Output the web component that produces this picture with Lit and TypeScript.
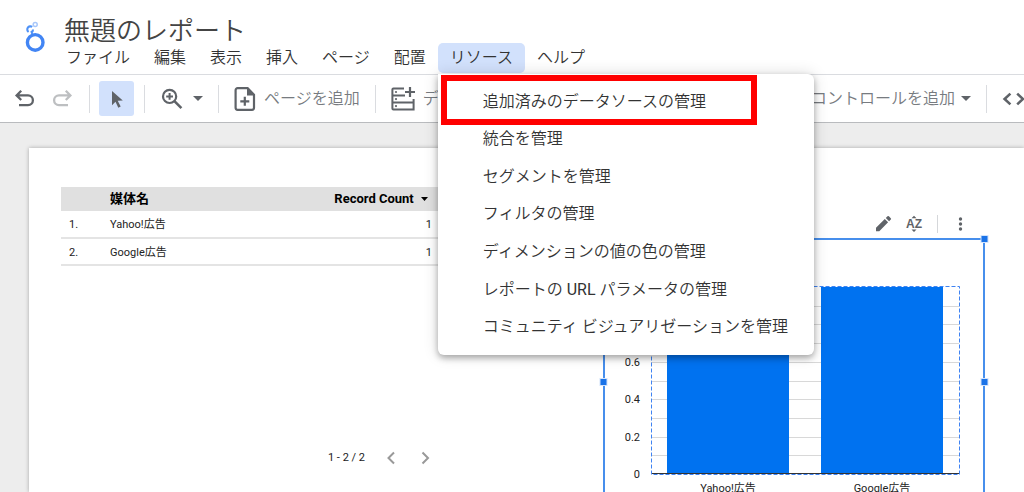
import { LitElement, html, svg, css } from "lit";
import { customElement, property } from "lit/decorators.js";

const MENUS = ["ファイル", "編集", "表示", "挿入", "ページ", "配置", "リソース", "ヘルプ"];
const OPEN_MENU = "リソース";
const RESOURCE_ITEMS = [
  "追加済みのデータソースの管理",
  "統合を管理",
  "セグメントを管理",
  "フィルタの管理",
  "ディメンションの値の色の管理",
  html`レポートの <span class="latin">URL</span> パラメータの管理`,
  "コミュニティ ビジュアリゼーションを管理",
];
const DATA = [
  { name: "Yahoo!広告", count: 1 },
  { name: "Google広告", count: 1 },
];

const caret = svg`<svg width="10" height="5" viewBox="0 0 10 5" aria-hidden="true"><path d="M0 0h10L5 5z" fill="currentColor"/></svg>`;

@customElement("resource-menu")
class ResourceMenu extends LitElement {
  static styles = css`
    :host { display: block; }
    .list {
      box-sizing: border-box;
      width: 376px;
      height: 281px;
      padding: 7px 0 11px;
      display: grid;
      grid-auto-rows: 1fr;
      background: #fff;
      border-radius: 0 6px 6px 6px;
      box-shadow: 0 3px 6px rgba(0, 0, 0, 0.3), 0 0 16px rgba(0, 0, 0, 0.14);
    }
    .item {
      font: inherit;
      color: #333;
      text-align: left;
      padding: 0 0 0 45px;
      border: 0;
      background: none;
      white-space: nowrap;
    }
    .latin { font-weight: 400; }
    .highlight {
      position: absolute;
      left: 3px;
      top: 1px;
      width: 316px;
      height: 50px;
      box-sizing: border-box;
      border: 6px solid #f00;
      pointer-events: none;
    }
  `;
  render() {
    return html`
      <div class="list" role="menu">
        ${RESOURCE_ITEMS.map((t) => html`<button class="item" role="menuitem">${t}</button>`)}
      </div>
      <div class="highlight"></div>
    `;
  }
}

@customElement("report-header")
class ReportHeader extends LitElement {
  static styles = css`
    :host { display: block; position: relative; z-index: 2; background: #fff; border-bottom: 1px solid #dadce0; font-weight: 350; }
    .header { display: flex; height: 74px; }
    .logo { flex: none; margin: 20px 6px 0 20px; }
    .title { margin: 15px 0 0 10px; font-size: 26px; line-height: 32px; height: 28px; color: #444; white-space: nowrap; }
    .nav { display: flex; }
    .slot { position: relative; }
    .menu {
      font: inherit;
      font-size: 16px;
      line-height: 30px;
      height: 30px;
      padding: 0 12px;
      border: 0;
      border-radius: 5px;
      background: none;
      color: #333;
      white-space: nowrap;
    }
    .open { background: #d2e1fc; }
    .dropdown { position: absolute; left: 0; top: 31px; font-size: 16px; }
  `;
  render() {
    return html`
      <header class="header">
        <svg class="logo" width="28" height="34" viewBox="0 0 28 34" role="img" aria-label="Looker Studio">
          <circle cx="15.2" cy="22.4" r="7.8" fill="none" stroke="#4285f4" stroke-width="3.4" />
          <path d="M12.2 6.9A3.1 3.1 0 1 0 8.6 12M13 9.4A3 3 0 0 1 11.6 12L12.400 14.200" fill="none" stroke="#4f92f7" stroke-width="2.1" />
          <circle cx="15.2" cy="4.4" r="2" fill="none" stroke="#a8c7fa" stroke-width="1.5" />
        </svg>
        <div>
          <div class="title">無題のレポート</div>
          <nav class="nav">
            ${MENUS.map(
              (m) => html`<div class="slot">
                <button class="menu ${m === OPEN_MENU ? "open" : ""}">${m}</button>
                ${m === OPEN_MENU ? html`<resource-menu class="dropdown"></resource-menu>` : ""}
              </div>`
            )}
          </nav>
        </div>
      </header>
    `;
  }
}

@customElement("report-toolbar")
class ReportToolbar extends LitElement {
  static styles = css`
    :host { display: block; background: #fff; border-bottom: 1px solid #b9bbbe; overflow: hidden; font-weight: 350; }
    .bar { height: 47px; display: flex; align-items: center; padding-left: 13px; color: #5f6368; }
    .btn {
      flex: none;
      display: flex;
      align-items: center;
      font: inherit;
      font-size: 16px;
      line-height: 24px;
      color: #777b80;
      padding: 0;
      border: 0;
      background: none;
      white-space: nowrap;
    }
    .icon { color: #5f6368; display: block; flex: none; }
    .faded { color: #bdbfc1; }
    .redo { margin-left: 13px; }
    .select { width: 35px; height: 35px; border-radius: 3px; background: #d2e1fc; justify-content: center; }
    .sep { flex: none; width: 1px; height: 28px; background: #dadce0; margin: 0 15px; }
    .near { margin: 0 9px 0 15px; }
    .tight { margin: 0 15px 0 10px; }
    .zoom { gap: 9px; color: #5f6368; }
    .label { gap: 8px; }
    .right { margin-left: auto; gap: 6px; }
    .dark { color: #5f6368; display: flex; }
  `;
  render() {
    return html`
      <div class="bar" role="toolbar">
        <button class="btn" aria-label="元に戻す">
          <svg class="icon" width="24" height="24" viewBox="0 0 24 24"><path d="M8.2 3.8L3.6 8.4l4.6 4.6M4 8.4h11a4.9 4.9 0 0 1 0 9.8H6" fill="none" stroke="currentColor" stroke-width="2.3" /></svg>
        </button>
        <button class="btn redo" aria-label="やり直す">
          <svg class="icon faded" width="24" height="24" viewBox="0 0 24 24"><path d="M15.8 3.8l4.6 4.6-4.6 4.6M20 8.4H9a4.9 4.9 0 0 0 0 9.8h9" fill="none" stroke="currentColor" stroke-width="2.3" /></svg>
        </button>
        <span class="sep near"></span>
        <button class="btn select" aria-label="選択">
          <svg class="icon" width="20" height="20" viewBox="0 0 20 20"><path d="M5 2l10.8 9.4-5.1.4 3 5.8-2.4 1.2-2.8-6L5 16.2z" fill="currentColor" /></svg>
        </button>
        <span class="sep tight"></span>
        <button class="btn zoom" aria-label="ズーム">
          <svg class="icon" width="24" height="24" viewBox="0 0 24 24"><circle cx="9.6" cy="9.4" r="6.6" fill="none" stroke="currentColor" stroke-width="2.2" /><path d="M14.4 14.2l7 7" stroke="currentColor" stroke-width="2.6" /><path d="M9.6 6v6.8M6.2 9.4H13" stroke="currentColor" stroke-width="2" /></svg>
          ${caret}
        </button>
        <span class="sep"></span>
        <button class="btn label">
          <svg class="icon" width="22" height="24" viewBox="0 0 22 24"><path d="M3.6 1.2h10L20 7.6v13.2a2 2 0 0 1-2 2H3.6a2 2 0 0 1-2-2V3.2a2 2 0 0 1 2-2z" fill="none" stroke="currentColor" stroke-width="2.2" /><path d="M13 1v7.4h7z" fill="currentColor" /><path d="M10.8 9.8v9M6.3 14.3h9" stroke="currentColor" stroke-width="2.2" /></svg>
          ページを追加
        </button>
        <span class="sep"></span>
        <button class="btn label">
          <svg class="icon" width="24" height="24" viewBox="0 0 24 24"><path d="M13 1.4H2.4a1 1 0 0 0-1 1v19.2a1 1 0 0 0 1 1h20.2v-7H1.4M1.4 8.6H14M1.4 15.6h15M22.6 12v4" fill="none" stroke="currentColor" stroke-width="2" /><path d="M19 0v10M14 5h10" stroke="currentColor" stroke-width="2.2" /><circle cx="5" cy="5" r="1.1" fill="currentColor" /><circle cx="5" cy="12.1" r="1.1" fill="currentColor" /><circle cx="5" cy="19.1" r="1.1" fill="currentColor" /></svg>
          データ
        </button>
        <button class="btn right">コントロールを追加 <span class="dark">${caret}</span></button>
        <span class="sep"></span>
        <button class="btn" aria-label="URL の埋め込み">
          <svg class="icon" width="22" height="24" viewBox="0 0 22 24"><path d="M8.4 6.6L2.6 12l5.8 5.4M15.2 6.6L21 12l-5.8 5.4" fill="none" stroke="currentColor" stroke-width="2.6" /></svg>
        </button>
      </div>
    `;
  }
}

@customElement("report-table")
class ReportTable extends LitElement {
  static styles = css`
    :host { display: block; font-family: Roboto, "Noto Sans CJK JP", sans-serif; color: #222; }
    .table { width: 100%; border-collapse: collapse; table-layout: fixed; font-size: 11px; }
    .num { width: 49px; }
    .head { height: 24px; padding: 0; background: #e0e0e0; color: #000; font-size: 13px; line-height: 20px; font-weight: 700; text-align: left; }
    .head.value { text-align: right; padding-right: 12px; }
    .tri { margin-left: 4px; vertical-align: 2px; }
    .cell { height: 27px; box-sizing: border-box; padding: 2px 0 0; line-height: 18px; border-bottom: 2px solid #e4e4e4; }
    .cell.index { padding-left: 8px; }
    .cell.value { text-align: right; padding-right: 8px; }
    .pager { display: flex; align-items: center; justify-content: flex-end; margin-top: 180px; padding-right: 3px; }
    .range { font-size: 11px; line-height: 24px; margin-right: 14px; }
    .page { display: block; padding: 0; border: 0; background: none; color: #999; height: 24px; }
    .page + .page { margin-left: 10px; }
    .page svg { display: block; }
  `;
  render() {
    return html`
      <table class="table">
        <thead>
          <tr>
            <th class="head num"></th>
            <th class="head">媒体名</th>
            <th class="head value">Record Count <svg class="tri" width="7" height="4" viewBox="0 0 7 4"><path d="M0 0h7L3.5 4z" /></svg></th>
          </tr>
        </thead>
        <tbody>
          ${DATA.map(
            (d, i) => html`<tr>
              <td class="cell index">${i + 1}.</td>
              <td class="cell">${d.name}</td>
              <td class="cell value">${d.count}</td>
            </tr>`
          )}
        </tbody>
      </table>
      <div class="pager">
        <span class="range">1 - 2 / 2</span>
        <button class="page" aria-label="前へ"><svg width="24" height="24" viewBox="0 0 24 24"><path d="M15 6.5L9.5 12l5.5 5.5" fill="none" stroke="currentColor" stroke-width="2" /></svg></button>
        <button class="page" aria-label="次へ"><svg width="24" height="24" viewBox="0 0 24 24"><path d="M9.5 6.5L15 12l-5.5 5.5" fill="none" stroke="currentColor" stroke-width="2" /></svg></button>
      </div>
    `;
  }
}

@customElement("report-chart")
class ReportChart extends LitElement {
  @property({ type: Number }) max = 1;

  static styles = css`
    :host { display: block; font-family: Roboto, "Noto Sans CJK JP", sans-serif; }
    .tools { display: flex; align-items: center; justify-content: flex-end; height: 28px; padding-right: 14px; color: #5f6368; }
    .tool { display: block; padding: 0; border: 0; background: none; color: inherit; height: 20px; }
    .tool svg { display: block; }
    .az { margin: 0 12px 0 10px; }
    .sep { width: 1px; height: 18px; background: #d5d7da; margin-right: 13px; }
    .plot { display: block; overflow: visible; }
    .text { font-size: 11px; fill: #222; }
    .sort { font-size: 12px; font-weight: 700; fill: currentColor; }
  `;
  render() {
    const left = 48;
    const right = 356;
    const top = 49;
    const base = 236;
    const step = (base - top) / 10;
    const lines = Array.from({ length: 9 }, (_, i) => Math.round(base - step * (i + 1)) + 0.5);
    const ticks = [0, 0.2, 0.4, 0.6];
    const handles = [[381, 0], [381, 143], [0, 143]];
    return html`
      <div class="tools">
        <button class="tool" aria-label="編集"><svg width="20" height="20" viewBox="0 0 20 20"><path d="M3 17.2v-3.4l8.8-8.8 3.3 3.3-8.8 8.9zM12.8 4l1.7-1.7a1 1 0 0 1 1.4 0l1.9 1.9a1 1 0 0 1 0 1.4L16.1 7.3z" fill="currentColor" /></svg></button>
        <button class="tool az" aria-label="並べ替え"><svg width="22" height="20" viewBox="0 0 22 20"><path d="M8.5 4.2L11 1.800l2.500 2.400zM8.500 15.600h5L11 18z" fill="currentColor" /><text class="sort" x="11" y="14" text-anchor="middle">AZ</text></svg></button>
        <span class="sep"></span>
        <button class="tool" aria-label="その他"><svg width="20" height="20" viewBox="0 0 20 20"><circle cx="9.5" cy="5" r="1.7" fill="currentColor" /><circle cx="9.5" cy="10" r="1.7" fill="currentColor" /><circle cx="9.5" cy="15" r="1.7" fill="currentColor" /></svg></button>
      </div>
      <svg class="plot" width="382" height="288" viewBox="0 0 382 288" role="img" aria-label="媒体名別 Record Count">
        ${lines.map((y) => svg`<path d="M${left} ${y}H${right}" stroke="#d8d8d8" />`)}
        ${DATA.map((d, i) => {
          const h = ((base - top) * d.count) / this.max;
          const x = left + 16 + i * 154;
          return svg`<rect x=${x} y=${base - h} width="122" height=${h} fill="#0072f0" />
            <text class="text" x=${x + 61} y="254" text-anchor="middle">${d.name}</text>`;
        })}
        ${ticks.map((t) => svg`<text class="text" x="37" y=${Math.round(base - step * 10 * t + 4)} text-anchor="end">${t}</text>`)}
        <path d="M${left} 235.5H${right + 1}" stroke="#333" />
        <rect x="48.5" y="48.5" width="308" height="188" fill="none" stroke="#3f83f2" stroke-dasharray="4 2" />
        <rect x="1" y="1" width="380" height="285" fill="none" stroke="#1a73e8" stroke-width="1.6" />
        ${handles.map(([x, y]) => svg`<rect x=${x - 3} y=${y - 2.5} width="7" height="7" fill="#1a73e8" stroke="#d2e3fc" />`)}
      </svg>
    `;
  }
}

@customElement("app-root")
class AppRoot extends LitElement {
  static styles = css`
    :host {
      display: flex;
      flex-direction: column;
      height: 100vh;
      overflow: hidden;
      font-family: Roboto, "Noto Sans CJK JP", sans-serif;
      background: #ededed;
    }
    .workspace { flex: 1; min-height: 0; overflow: hidden; display: flex; padding: 25px 0 0 29px; }
    .sheet { position: relative; flex: 1; background: #fff; box-shadow: 0 0 4px rgba(0, 0, 0, 0.3); }
    .table { position: absolute; left: 32px; top: 39px; width: 379px; }
    .chart { position: absolute; left: 574px; top: 62px; width: 382px; }
  `;
  render() {
    return html`
      <report-header></report-header>
      <report-toolbar></report-toolbar>
      <main class="workspace">
        <div class="sheet">
          <report-table class="table"></report-table>
          <report-chart class="chart" max="1"></report-chart>
        </div>
      </main>
    `;
  }
}
